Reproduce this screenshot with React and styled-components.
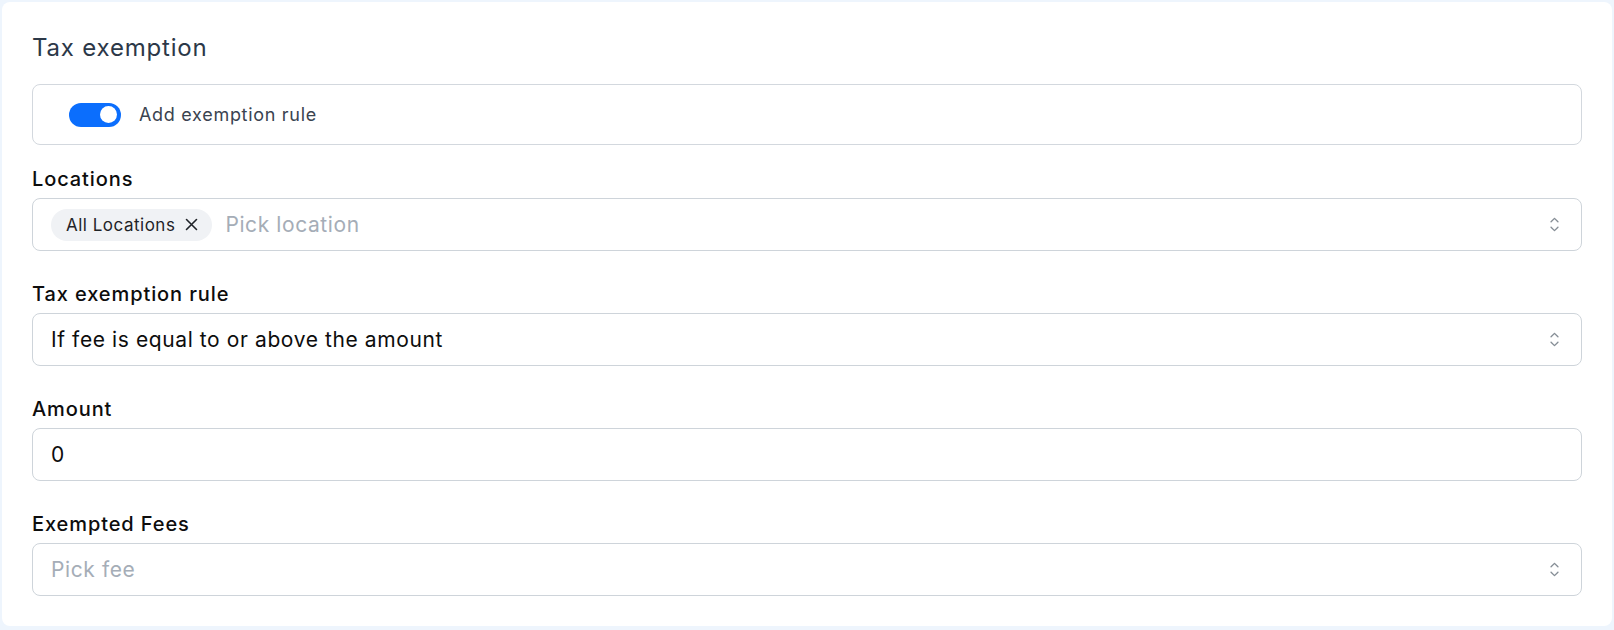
import React from "react";
import styled, { createGlobalStyle } from "styled-components";

const GlobalStyle = createGlobalStyle`
  * {
    box-sizing: border-box;
  }

  body {
    margin: 0;
    background: #eef5fd;
    font-family: "Inter", "Noto Sans", sans-serif;
  }
`;

function SortIcon() {
  return (
    <Chevron width="23" height="23" viewBox="0 0 15 15">
      <path d="M4.93179 5.43179C4.75605 5.60753 4.75605 5.89245 4.93179 6.06819C5.10753 6.24392 5.39245 6.24392 5.56819 6.06819L7.49999 4.13638L9.43179 6.06819C9.60753 6.24392 9.89245 6.24392 10.0682 6.06819C10.2439 5.89245 10.2439 5.60753 10.0682 5.43179L7.81819 3.18179C7.73379 3.0974 7.61933 3.04999 7.49999 3.04999C7.38064 3.04999 7.26618 3.0974 7.18179 3.18179L4.93179 5.43179ZM10.0682 9.56819C10.2439 9.39245 10.2439 9.10753 10.0682 8.93179C9.89245 8.75606 9.60753 8.75606 9.43179 8.93179L7.49999 10.8636L5.56819 8.93179C5.39245 8.75606 5.10753 8.75606 4.93179 8.93179C4.75605 9.10753 4.75605 9.39245 4.93179 9.56819L7.18179 11.8182C7.35753 11.9939 7.64245 11.9939 7.81819 11.8182L10.0682 9.56819Z" />
    </Chevron>
  );
}

function Field({ label, children, select }) {
  return (
    <FieldWrap>
      <Label>{label}</Label>
      <InputBox>
        <InputInner>{children}</InputInner>
        {select && <SortIcon />}
      </InputBox>
    </FieldWrap>
  );
}

function App() {
  return (
    <>
      <GlobalStyle />
      <Page>
        <Card>
          <Title>Tax exemption</Title>
          <ToggleBox>
            <Switch>
              <Thumb />
            </Switch>
            <SwitchLabel>Add exemption rule</SwitchLabel>
          </ToggleBox>
          <Fields>
            <Field label="Locations" select>
              <Chip>
                All Locations
                <svg width="13" height="13" viewBox="0 0 13 13">
                  <path
                    d="M1.5 1.5L11.5 11.5M11.5 1.5L1.5 11.5"
                    stroke="#1f2328"
                    strokeWidth="1.6"
                    strokeLinecap="round"
                  />
                </svg>
              </Chip>
              <Value $placeholder>Pick location</Value>
            </Field>
            <Field label="Tax exemption rule" select>
              <Value>If fee is equal to or above the amount</Value>
            </Field>
            <Field label="Amount">
              <Value>0</Value>
            </Field>
            <Field label="Exempted Fees" select>
              <Value $placeholder>Pick fee</Value>
            </Field>
          </Fields>
        </Card>
      </Page>
    </>
  );
}

const Page = styled.div`
  padding: 2px 2px 3px;
`;

const Card = styled.div`
  display: flex;
  flex-direction: column;
  background: #ffffff;
  border-radius: 8px;
  padding: 30px;
`;

const Title = styled.h2`
  margin: 0 0 20px;
  font-size: 24px;
  line-height: 32px;
  letter-spacing: 0.8px;
  font-weight: 400;
  color: #2c3848;
`;

const ToggleBox = styled.div`
  display: flex;
  align-items: center;
  gap: 18px;
  height: 61px;
  padding-left: 36px;
  border: 1px solid #d3d8de;
  border-radius: 8px;
  margin-bottom: 21px;
`;

const Switch = styled.div`
  display: flex;
  align-items: center;
  justify-content: flex-end;
  width: 52px;
  height: 24px;
  padding-right: 4px;
  border-radius: 12px;
  background: #0b6efd;
`;

const Thumb = styled.div`
  width: 17px;
  height: 17px;
  border-radius: 50%;
  background: #ffffff;
`;

const SwitchLabel = styled.span`
  font-size: 18px;
  letter-spacing: 0.7px;
  font-weight: 400;
  color: #3a4350;
`;

const Fields = styled.div`
  display: flex;
  flex-direction: column;
  gap: 30px;
`;

const FieldWrap = styled.div`
  display: flex;
  flex-direction: column;
  gap: 6px;
`;

const Label = styled.label`
  font-size: 20px;
  line-height: 26px;
  letter-spacing: 0.9px;
  font-weight: 500;
  color: #0d0d0d;
`;

const InputBox = styled.div`
  display: flex;
  align-items: center;
  justify-content: space-between;
  height: 53px;
  padding: 0 15px 0 18px;
  border: 1px solid #ced4da;
  border-radius: 8px;
`;

const InputInner = styled.div`
  display: flex;
  align-items: center;
  gap: 13px;
`;

const Value = styled.span`
  font-size: 21px;
  letter-spacing: 0.6px;
  color: ${({ $placeholder }) => ($placeholder ? "#a5adb7" : "#0d0d0d")};
`;

const Chip = styled.span`
  display: flex;
  align-items: center;
  gap: 10px;
  height: 32px;
  padding: 0 14px 0 15px;
  border-radius: 16px;
  background: #f0f2f5;
  font-size: 17px;
  letter-spacing: 0.5px;
  color: #1f2328;
`;

const Chevron = styled.svg`
  fill: #868e96;
  flex-shrink: 0;
`;

export default App;
